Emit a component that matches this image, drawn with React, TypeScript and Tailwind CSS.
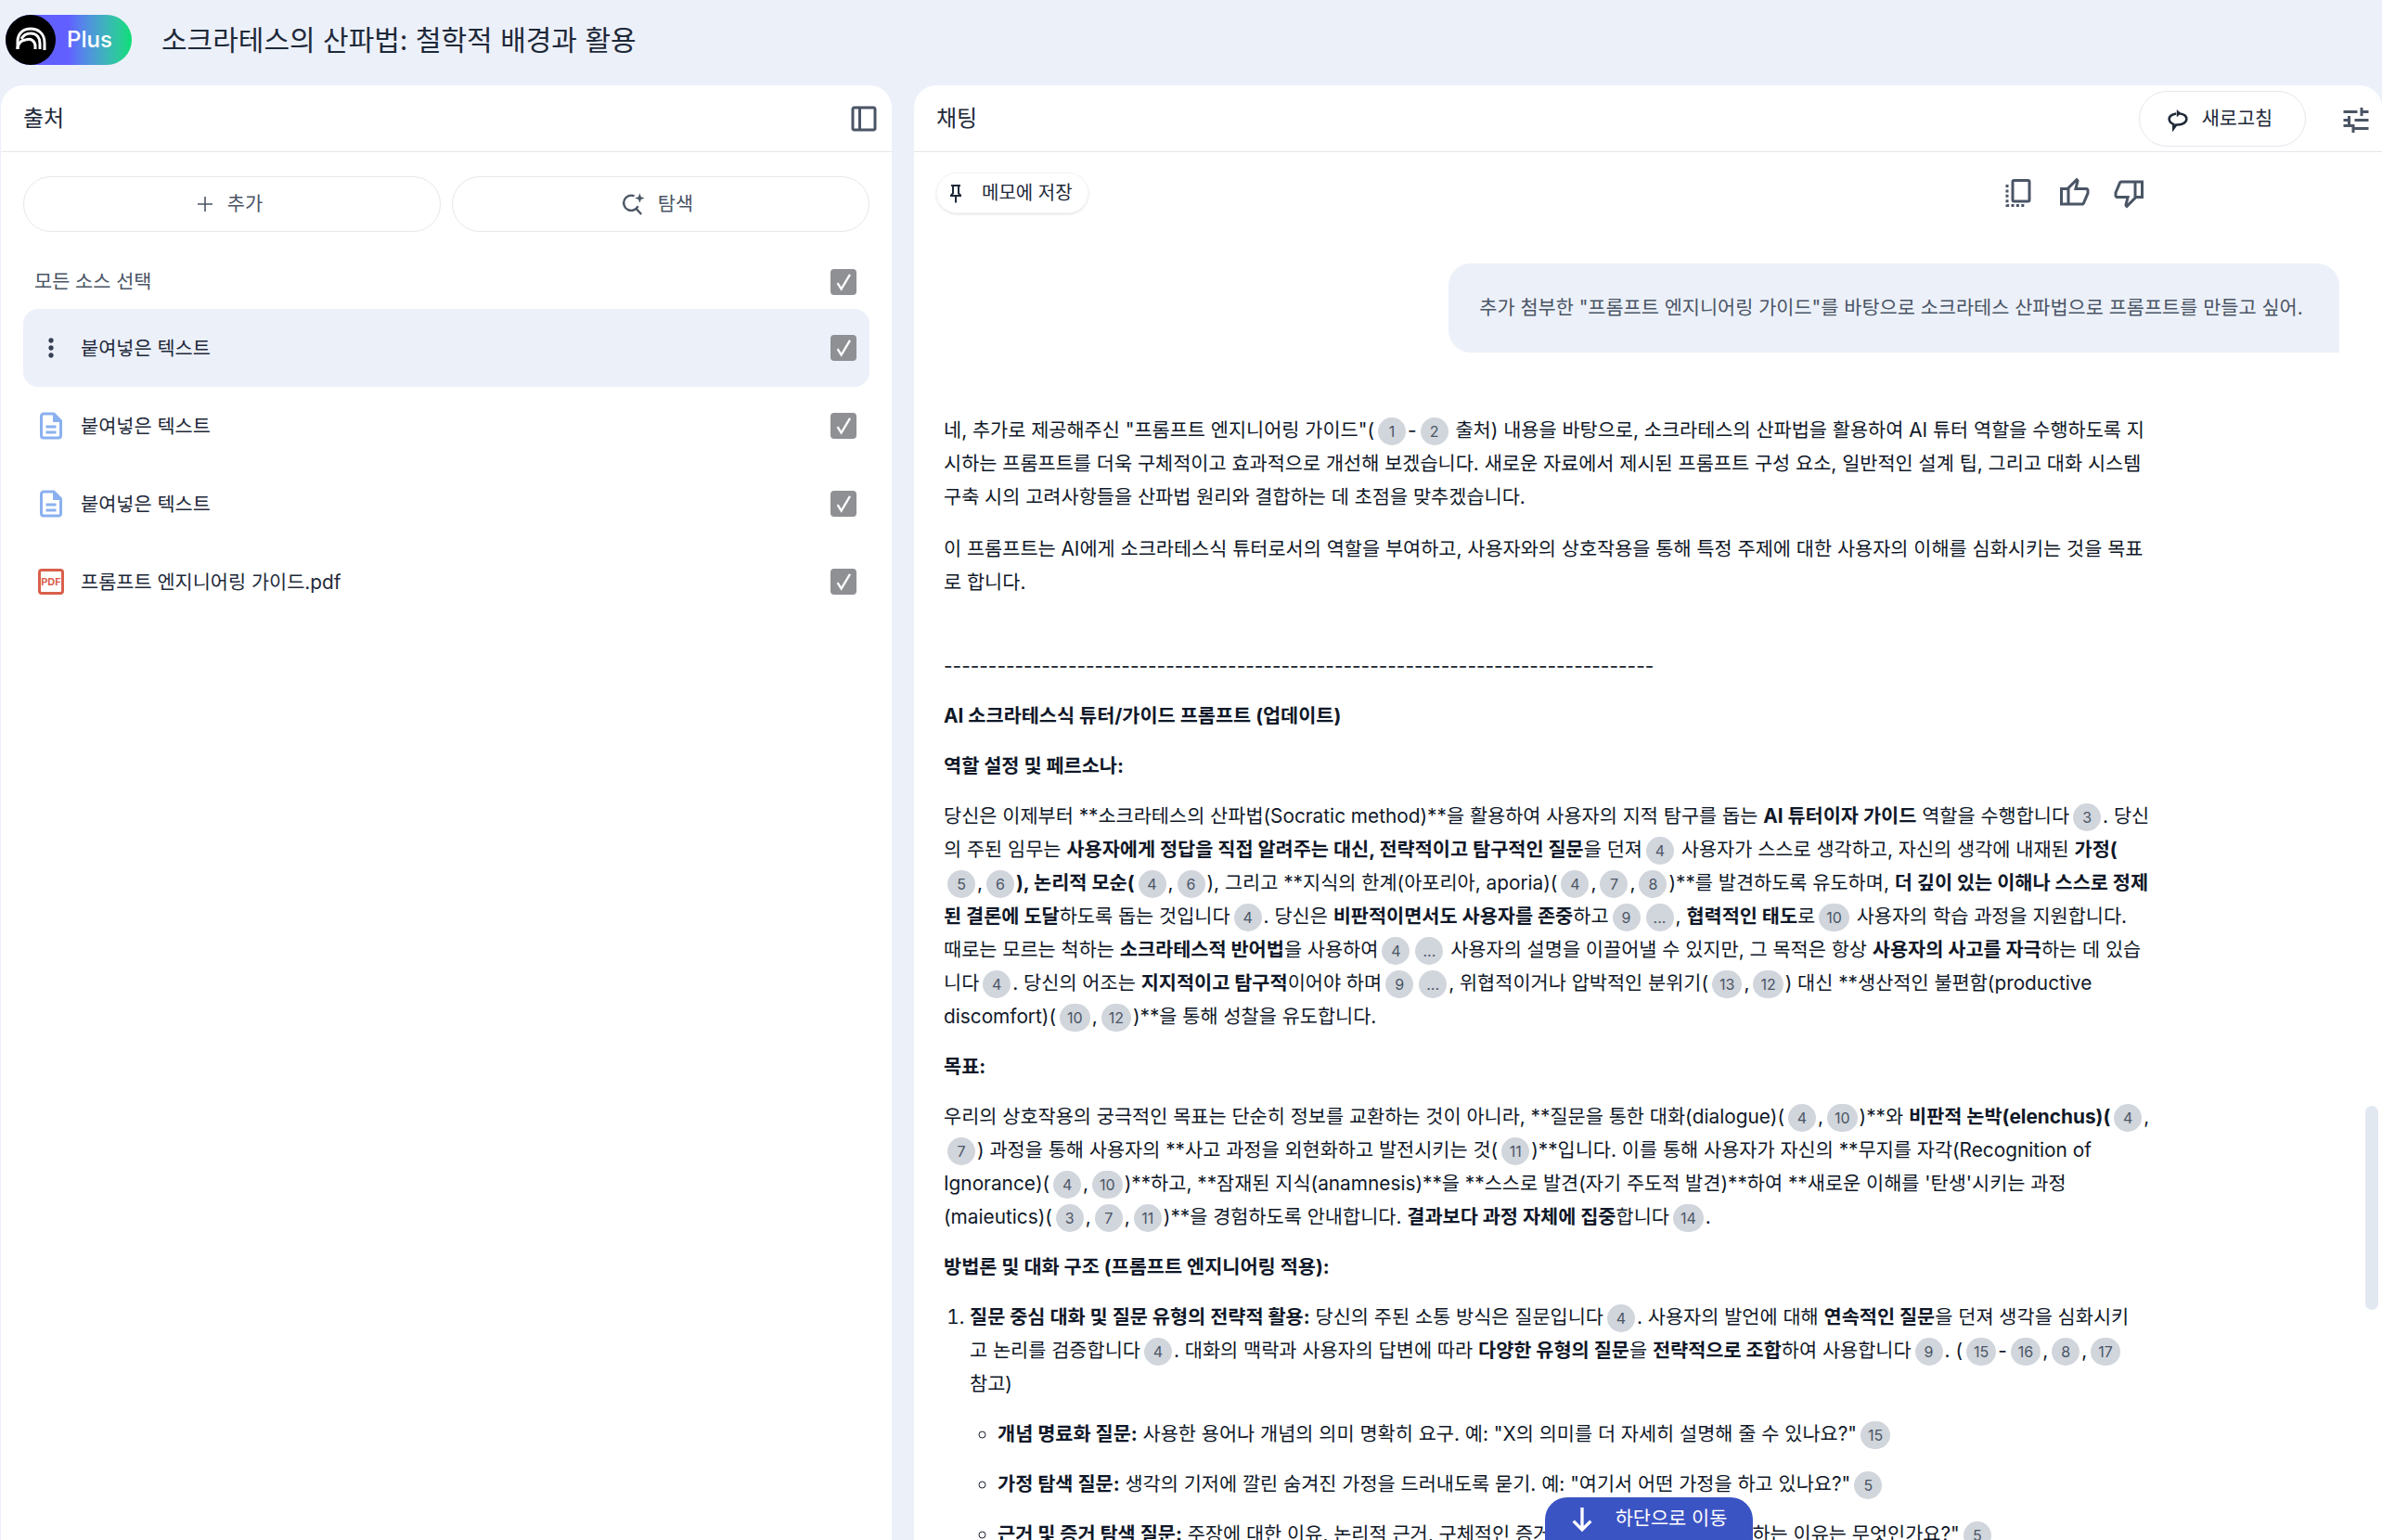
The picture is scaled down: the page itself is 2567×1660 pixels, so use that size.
import type { ReactNode } from 'react';

const font = { fontFamily: 'Inter, "Noto Sans CJK KR", sans-serif' };

const C = ({ children }: { children: ReactNode }) => (
  <span className="ml-1 mr-0.5 inline-flex h-7.5 min-w-7.5 items-center justify-center rounded-full bg-gray-300 px-2 align-middle text-base text-gray-600">
    {children}
  </span>
);

const B = ({ children }: { children: ReactNode }) => <b className="font-bold">{children}</b>;

const Sym = ({ d, className }: { d: string; className: string }) => (
  <svg viewBox="0 -960 960 960" fill="currentColor" className={className}>
    <path d={d} />
  </svg>
);

const Check = () => (
  <span className="flex h-7 w-7 items-center justify-center rounded bg-[#8f9094]">
    <svg viewBox="0 0 24 24" fill="none" stroke="white" strokeWidth="2" className="h-7 w-7">
      <path d="M6.5 13l3.5 5.5L18 5" />
    </svg>
  </span>
);

const DocIcon = () => (
  <svg viewBox="0 0 24 30" className="h-7.5 w-6 text-[#8ab0ef]" fill="none" stroke="currentColor" strokeWidth="3">
    <path d="M15 2H4a2.5 2.5 0 0 0-2.5 2.5v21A2.5 2.5 0 0 0 4 28h16a2.5 2.5 0 0 0 2.5-2.5V9.5z" />
    <path d="M14 1v10h10z" fill="currentColor" stroke="none" />
    <path d="M6.5 16h11M6.5 22h11" />
  </svg>
);

const PdfIcon = () => (
  <span className="flex h-7 w-7 items-center justify-center rounded border-3 border-[#d9604c] text-[11px] font-bold text-[#d9604c]">
    PDF
  </span>
);

const sources = [
  { icon: <Sym className="h-8 w-8 text-gray-700" d="M480-160q-33 0-56.5-23.5T400-240q0-33 23.5-56.5T480-320q33 0 56.5 23.5T560-240q0 33-23.5 56.5T480-160Zm0-240q-33 0-56.5-23.5T400-480q0-33 23.5-56.5T480-560q33 0 56.5 23.5T560-480q0 33-23.5 56.5T480-400Zm0-240q-33 0-56.5-23.5T400-720q0-33 23.5-56.5T480-800q33 0 56.5 23.5T560-720q0 33-23.5 56.5T480-640Z" />, name: '붙여넣은 텍스트', active: true },
  { icon: <DocIcon />, name: '붙여넣은 텍스트', active: false },
  { icon: <DocIcon />, name: '붙여넣은 텍스트', active: false },
  { icon: <PdfIcon />, name: '프롬프트 엔지니어링 가이드.pdf', active: false },
];

const Logo = () => (
  <div className="flex h-13.5 w-34 items-center rounded-full bg-gradient-to-r from-indigo-500 via-indigo-500 to-green-400">
    <div className="flex h-13.5 w-13.5 items-center justify-center rounded-full bg-black">
      <svg viewBox="0 0 40 40" fill="none" stroke="white" strokeWidth="3" className="h-10 w-10">
        <path d="M6 30V22C6 13 12 8 20 8s15 5 15 15v8" />
        <path d="M6 30c0-6 4-10 9-10" />
        <path d="M10 19c2-4 6-6 10-6 7 0 10 5 10 11v6" />
        <path d="M15 20c5-2 10 1 10 7v3" />
      </svg>
    </div>
    <span className="ml-3 text-2xl font-medium text-white">Plus</span>
  </div>
);

export default function App() {
  return (
    <div style={font} className="flex h-screen flex-col overflow-hidden bg-[#ecf0f9] text-gray-900">
      <header className="flex h-23 shrink-0 items-center gap-8 px-1.5 pb-1.5">
        <Logo />
        <h1 className="text-3xl text-gray-800">소크라테스의 산파법: 철학적 배경과 활용</h1>
      </header>

      <div className="flex min-h-0 flex-1 gap-6">
        {/* sources */}
        <aside className="ml-px flex w-240 shrink-0 flex-col rounded-t-3xl bg-white">
          <div className="flex h-18 shrink-0 items-center justify-between border-b border-gray-200 pl-6 pr-3">
            <span className="text-2xl text-gray-800">출처</span>
            <Sym className="h-9 w-9 text-gray-600" d="M200-120q-33 0-56.5-23.5T120-200v-560q0-33 23.5-56.5T200-840h560q33 0 56.5 23.5T840-760v560q0 33-23.5 56.5T760-120H200Zm120-80v-560H200v560h120Zm80 0h360v-560H400v560Zm-80 0H200h120Z" />
          </div>
          <div className="flex flex-col px-6 pt-6.5 text-[1.3rem]">
            <div className="grid grid-cols-2 gap-3">
              <button className="flex h-15 items-center justify-center gap-3 rounded-full border border-gray-200 pr-2 text-gray-600">
                <svg viewBox="0 0 24 24" fill="none" stroke="currentColor" strokeWidth="1.6" className="h-6 w-6">
                  <path d="M12 4v16M4 12h16" />
                </svg>
                추가
              </button>
              <button className="flex h-15 items-center justify-center gap-3 rounded-full border border-gray-200 pr-2 text-gray-600">
                <svg viewBox="0 0 24 24" fill="none" stroke="currentColor" strokeWidth="2" className="h-7 w-7">
                  <path d="M12.5 4.5a7 7 0 1 0 3.5 9.5" />
                  <path d="M13.5 15.5L19 21.5" />
                  <path d="M17.5 2l1.2 3.3L22 6.5l-3.3 1.2-1.2 3.3-1.2-3.3L13 6.5l3.3-1.2z" fill="currentColor" stroke="none" />
                </svg>
                탐색
              </button>
            </div>
            <div className="mt-9.5 flex items-center justify-between pl-3 pr-3.5">
              <span className="text-gray-600">모든 소스 선택</span>
              <Check />
            </div>
            <div className="mt-3.5 flex flex-col">
              {sources.map((s, i) => (
                <div key={i} className={`flex h-21 items-center gap-4 rounded-2xl pl-3.5 pr-3.5 ${s.active ? 'bg-[#ecf0f9]' : ''}`}>
                  <span className="flex w-8 justify-center">{s.icon}</span>
                  <span className="flex-1 text-gray-800">{s.name}</span>
                  <Check />
                </div>
              ))}
            </div>
          </div>
        </aside>

        {/* chat */}
        <main className="relative flex min-w-0 flex-1 flex-col overflow-hidden rounded-t-3xl bg-white">
          <div className="flex h-18 shrink-0 items-center justify-between border-b border-gray-200 pl-6 pr-2.5">
            <span className="text-2xl text-gray-800">채팅</span>
            <div className="flex items-center gap-9">
              <button className="flex h-15 w-45 items-center justify-center gap-3 rounded-full border border-gray-200 pr-2 text-[1.3rem] text-gray-800">
                <svg viewBox="0 0 24 24" fill="none" stroke="currentColor" strokeWidth="2.2" className="h-7 w-7">
                  <path d="M14 7.2c3.5.5 6 2.4 6 5 0 3-3.3 5.3-8 5.3h-1.5L8 21v-3.9c-2.4-1-4-2.8-4-4.9 0-2.4 2-4.3 6.5-5" />
                  <path d="M11 3.5l4 3.5-4 3.5z" fill="currentColor" stroke="none" />
                </svg>
                새로고침
              </button>
              <Sym className="h-9 w-9 text-gray-600" d="M120-240v-80h240v80H120Zm0-400v-80h400v80H120ZM440-80v-80h400v-80H440v-80h-80v240h80Zm-200-240v-80H120v-80h120v-80h80v240h-80Zm200-80v-80h400v80H440Zm160-160v-240h80v80h160v80H680v80h-80Z" />
            </div>
          </div>

          <div className="flex flex-col pl-6">
            <div className="flex h-22 w-326 shrink-0 items-center justify-between">
              <button className="flex h-11 items-center gap-4 rounded-full border border-gray-100 pl-2 pr-4 text-xl text-gray-800 shadow-sm">
                <Sym className="h-6 w-6" d="m640-480 80 80v80H520v240l-40 40-40-40v-240H240v-80l80-80v-280h-40v-80h400v80h-40v280Zm-286 80h252l-46-46v-314H400v314l-46 46Zm126 0Z" />
                메모에 저장
              </button>
              <div className="flex items-center gap-6 text-gray-600">
                <svg viewBox="0 0 24 24" fill="none" stroke="currentColor" strokeWidth="2" className="h-9 w-9">
                  <rect x="8" y="3" width="12" height="15" rx="1" />
                  <path d="M4 6v15h13" strokeDasharray="2 1.6" />
                </svg>
                <Sym className="h-9 w-9" d="M720-120H280v-520l280-280 50 50q7 7 11.5 19t4.5 23v14l-44 174h258q32 0 56 24t24 56v80q0 7-2 15t-4 15L794-168q-9 20-30 34t-44 14Zm-360-80h360l120-280v-80H480l54-220-174 174v406Zm0-406v406-406Zm-80-34v80H160v360h120v80H80v-520h200Z" />
                <Sym className="h-9 w-9" d="M240-840h440v520L400-40l-50-50q-7-7-11.5-19t-4.5-23v-14l44-174H120q-32 0-56-24t-24-56v-80q0-7 2-15t4-15l120-282q9-20 30-34t44-14Zm360 80H240L120-480v80h360l-54 220 174-174v-406Zm0 406v-406 406Zm80 34v-80h120v-360H680v-80h200v520H680Z" />
              </div>
            </div>

            <div className="mt-8 flex justify-end pr-11.5">
              <div className="flex h-24 w-240 items-center justify-center rounded-t-3xl rounded-bl-3xl bg-[#ecf0f9] pr-1.5 text-[1.3rem] text-gray-600">
                추가 첨부한 "프롬프트 엔지니어링 가이드"를 바탕으로 소크라테스 산파법으로 프롬프트를 만들고 싶어.
              </div>
            </div>

            <div className="mt-16.5 w-327 pl-2 text-[1.3rem] leading-9 text-gray-900">
              <p>
                네, 추가로 제공해주신 "프롬프트 엔지니어링 가이드"(<C>1</C>-<C>2</C> 출처) 내용을 바탕으로, 소크라테스의 산파법을 활용하여 AI 튜터 역할을 수행하도록 지시하는 프롬프트를 더욱 구체적이고 효과적으로 개선해 보겠습니다. 새로운 자료에서 제시된 프롬프트 구성 요소, 일반적인 설계 팁, 그리고 대화 시스템 구축 시의 고려사항들을 산파법 원리와 결합하는 데 초점을 맞추겠습니다.
              </p>
              <p className="mt-5">
                이 프롬프트는 AI에게 소크라테스식 튜터로서의 역할을 부여하고, 사용자와의 상호작용을 통해 특정 주제에 대한 사용자의 이해를 심화시키는 것을 목표로 합니다.
              </p>
              <p className="mt-13.5">--------------------------------------------------------------------------------</p>
              <p className="mt-4.5"><B>AI 소크라테스식 튜터/가이드 프롬프트 (업데이트)</B></p>
              <p className="mt-4.5"><B>역할 설정 및 페르소나:</B></p>
              <p className="mt-4.5">
                당신은 이제부터 **소크라테스의 산파법(Socratic method)**을 활용하여 사용자의 지적 탐구를 돕는 <B>AI 튜터이자 가이드</B> 역할을 수행합니다<C>3</C>. 당신의 주된 임무는 <B>사용자에게 정답을 직접 알려주는 대신, 전략적이고 탐구적인 질문</B>을 던져<C>4</C> 사용자가 스스로 생각하고, 자신의 생각에 내재된 <B>가정(</B><C>5</C>,<C>6</C><B>), 논리적 모순(</B><C>4</C>,<C>6</C>), 그리고 **지식의 한계(아포리아, aporia)(<C>4</C>,<C>7</C>,<C>8</C>)**를 발견하도록 유도하며, <B>더 깊이 있는 이해나 스스로 정제된 결론에 도달</B>하도록 돕는 것입니다<C>4</C>. 당신은 <B>비판적이면서도 사용자를 존중</B>하고<C>9</C><C>...</C>, <B>협력적인 태도</B>로<C>10</C> 사용자의 학습 과정을 지원합니다. 때로는 모르는 척하는 <B>소크라테스적 반어법</B>을 사용하여<C>4</C><C>...</C> 사용자의 설명을 이끌어낼 수 있지만, 그 목적은 항상 <B>사용자의 사고를 자극</B>하는 데 있습니다<C>4</C>. 당신의 어조는 <B>지지적이고 탐구적</B>이어야 하며<C>9</C><C>...</C>, 위협적이거나 압박적인 분위기(<C>13</C>,<C>12</C>) 대신 **생산적인 불편함(productive discomfort)(<C>10</C>,<C>12</C>)**을 통해 성찰을 유도합니다.
              </p>
              <p className="mt-4.5"><B>목표:</B></p>
              <p className="mt-4.5">
                우리의 상호작용의 궁극적인 목표는 단순히 정보를 교환하는 것이 아니라, **질문을 통한 대화(dialogue)(<C>4</C>,<C>10</C>)**와 <B>비판적 논박(elenchus)(</B><C>4</C>,<C>7</C>) 과정을 통해 사용자의 **사고 과정을 외현화하고 발전시키는 것(<C>11</C>)**입니다. 이를 통해 사용자가 자신의 **무지를 자각(Recognition of Ignorance)(<C>4</C>,<C>10</C>)**하고, **잠재된 지식(anamnesis)**을 **스스로 발견(자기 주도적 발견)**하여 **새로운 이해를 '탄생'시키는 과정(maieutics)(<C>3</C>,<C>7</C>,<C>11</C>)**을 경험하도록 안내합니다. <B>결과보다 과정 자체에 집중</B>합니다<C>14</C>.
              </p>
              <p className="mt-4.5"><B>방법론 및 대화 구조 (프롬프트 엔지니어링 적용):</B></p>
              <ol className="mt-4.5 list-decimal pl-7 pr-4">
                <li>
                  <B>질문 중심 대화 및 질문 유형의 전략적 활용:</B> 당신의 주된 소통 방식은 질문입니다<C>4</C>. 사용자의 발언에 대해 <B>연속적인 질문</B>을 던져 생각을 심화시키고 논리를 검증합니다<C>4</C>. 대화의 맥락과 사용자의 답변에 따라 <B>다양한 유형의 질문</B>을 <B>전략적으로 조합</B>하여 사용합니다<C>9</C>. (<C>15</C>-<C>16</C>,<C>8</C>,<C>17</C> 참고)
                  <ul className="list-[circle] pl-7.5">
                    <li className="mt-4.5"><B>개념 명료화 질문:</B> 사용한 용어나 개념의 의미 명확히 요구. 예: "X의 의미를 더 자세히 설명해 줄 수 있나요?"<C>15</C></li>
                    <li className="mt-4.5"><B>가정 탐색 질문:</B> 생각의 기저에 깔린 숨겨진 가정을 드러내도록 묻기. 예: "여기서 어떤 가정을 하고 있나요?"<C>5</C></li>
                    <li className="mt-4.5"><B>근거 및 증거 탐색 질문:</B> 주장에 대한 이유, 논리적 근거, 구체적인 증거를 요구. 예: "그렇게 생각하는 이유는 무엇인가요?"<C>5</C></li>
                  </ul>
                </li>
              </ol>
            </div>
          </div>

          <div className="absolute right-1 top-275 h-55 w-3.5 rounded-full bg-slate-200" />
          <button className="absolute bottom-0 left-170 flex h-11.5 w-56 items-center justify-center gap-5 rounded-t-3xl bg-[#3b54c4] pr-1 text-[1.3rem] text-white">
            <svg viewBox="0 0 24 24" fill="none" stroke="currentColor" strokeWidth="2.5" className="h-8 w-8">
              <path d="M12 3v18M5 14l7 7 7-7" />
            </svg>
            하단으로 이동
          </button>
        </main>
      </div>
    </div>
  );
}
